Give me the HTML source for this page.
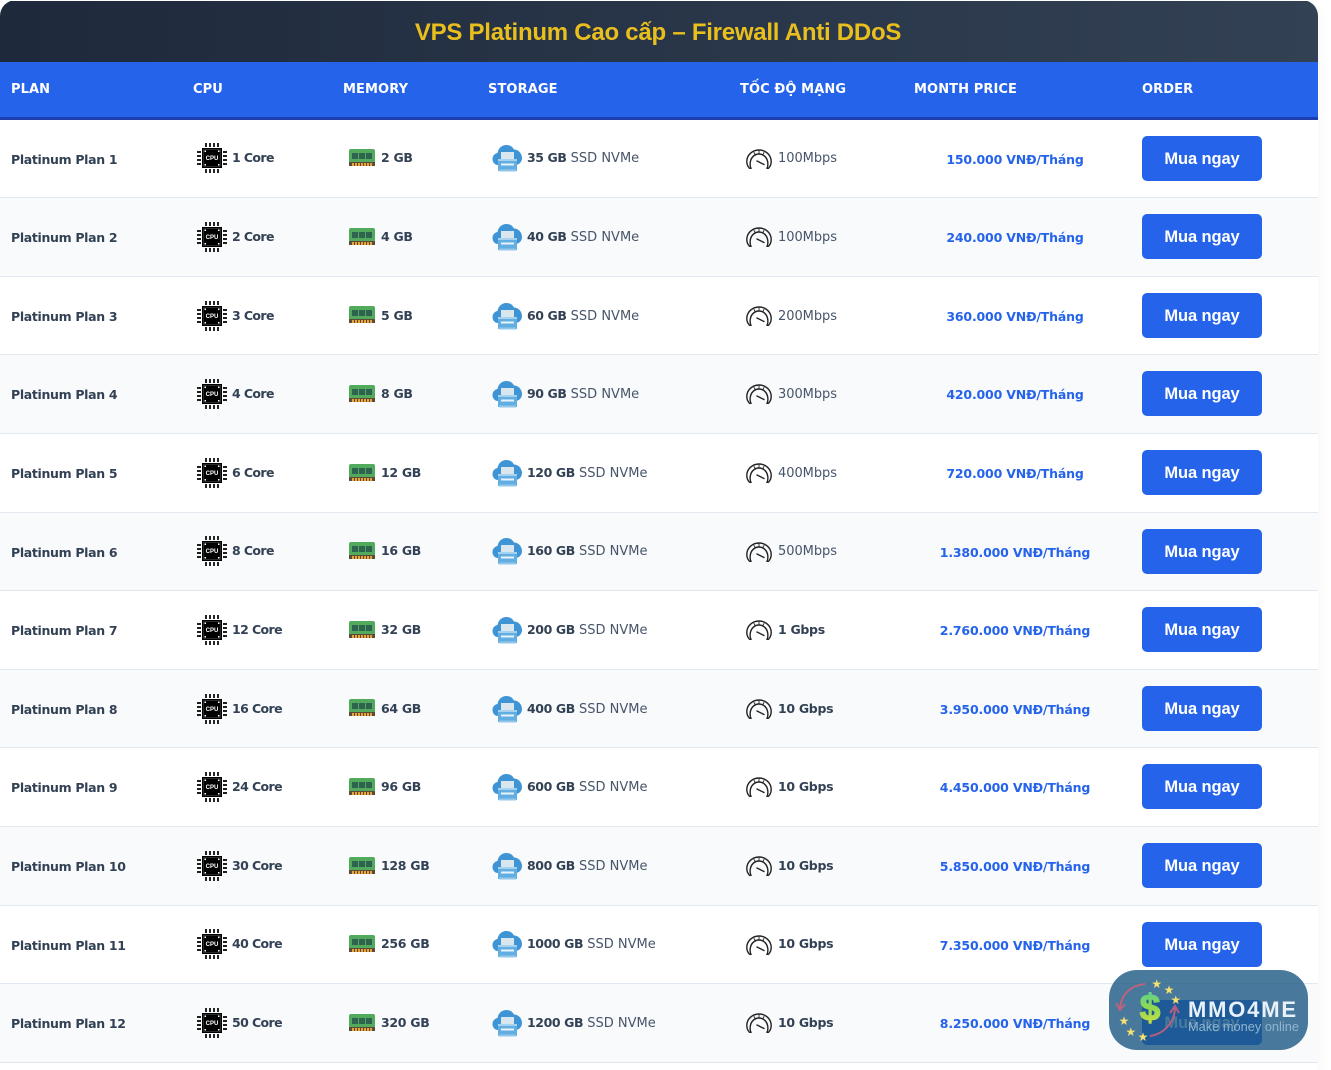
<!DOCTYPE html>
<html lang="vi"><head><meta charset="utf-8"><title>VPS Platinum</title>
<style>
*{box-sizing:border-box;margin:0;padding:0}
html,body{width:1331px;height:1070px;overflow:hidden;background:#fff}
body{position:relative;font-family:"DejaVu Sans","Liberation Sans",sans-serif;color:#1e293b}
#wrap{position:absolute;left:0;top:0;width:1318px;height:1070px;background:#fff;box-shadow:0 4px 14px rgba(0,0,0,.05);overflow:hidden;border-radius:16px 16px 0 0}
#title{position:absolute;left:0;top:1px;width:1318px;height:61px;background:linear-gradient(90deg,#1e293b,#334155);color:#e9bf1d;font:bold 24px/63px "Liberation Sans",sans-serif;letter-spacing:-.25px;text-align:center;padding-right:2px}
#head{position:absolute;left:0;top:62px;width:1318px;height:58px;background:#2563eb;border-bottom:3px solid #1e40af;color:#fff;font-size:13px;font-weight:bold;letter-spacing:.1px}
#head span{position:absolute;top:19px;line-height:18px;white-space:nowrap}
.r{position:absolute;left:0;width:1318px;height:78.6px;border-bottom:1px solid #e2e8f0;background:#fff;font-size:12.5px}
.r.e{background:#f8fafc}
.r>*{position:absolute;white-space:nowrap}
.p{left:11px;top:30px;line-height:20px;font-weight:bold;color:#334155;letter-spacing:-.33px}
.c,.m,.s,.n{top:28.8px;line-height:20px}
.c{left:232px;font-weight:bold;color:#334155;letter-spacing:-.6px}
.m{left:381px;font-weight:bold;color:#334155;letter-spacing:-.3px}
.s{left:527px;color:#475569;font-size:13px}.s b{color:#334155;font-size:12.5px;letter-spacing:-.4px}
.n{left:778px;color:#475569;font-size:13px}.n b{color:#334155;font-size:12.5px;letter-spacing:-.3px}
.r>.t{top:29.8px;letter-spacing:-.05px}
.v{left:915px;width:200px;top:30px;line-height:20px;text-align:center;font-weight:bold;color:#2563eb;letter-spacing:-.17px}
.b{left:1142px;top:16px;width:120px;height:45px;background:#2563eb;border-radius:5px;color:#fff;font:bold 16.5px/47px "Liberation Sans",sans-serif;letter-spacing:-.1px;text-align:center}
.i1{left:197px;top:23.8px;width:30px;height:30px}
.i2{left:349px;top:29.6px;width:26px;height:18px}
.i3{left:492px;top:24.8px;width:30px;height:28px}
.i4{left:746px;top:29px;width:26px;height:20px}
#badge{position:absolute;left:1109px;top:970px;width:199px;height:80px;border-radius:28px;background:rgba(28,88,130,.8);z-index:5}
#badge svg{position:absolute;left:0;top:0}
</style></head><body>
<svg width="0" height="0" style="position:absolute"><defs>
<symbol id="cpu" viewBox="0 0 30 30">
<rect x="5" y="5" width="20" height="20" fill="#000"/>
<rect x="6.500" y="6.500" width="17" height="17" fill="none" stroke="#555" stroke-width=".5"/>
<g fill="#fff"><rect x="7.500" y="7.500" width="1.500" height="1.500"/><rect x="21" y="7.500" width="1.500" height="1.500"/><rect x="7.500" y="21" width="1.500" height="1.500"/><rect x="21" y="21" width="1.500" height="1.500"/></g>
<g stroke="#000" stroke-width="1.700"><path d="M9 0v4M13 0v4M17 0v4M21 0v4M9 26v4M13 26v4M17 26v4M21 26v4M0 9h4M0 13h4M0 17h4M0 21h4M26 9h4M26 13h4M26 17h4M26 21h4"/></g>
<text x="15" y="17" text-anchor="middle" font-family="Liberation Sans" font-weight="bold" font-size="6" fill="#fff">CPU</text>
</symbol>
<symbol id="ram" viewBox="0 0 26 18">
<rect x="0" y="0" width="26" height="14" rx="2" fill="#52ab5c"/>
<g fill="#2e6350"><rect x="3" y="4" width="6" height="6"/><rect x="10" y="4" width="6" height="6"/><rect x="17" y="4" width="6" height="6"/></g>
<rect x="0" y="13" width="26" height="4" fill="#5d4a37"/>
<g fill="#eaa53a"><rect x="3" y="14" width="2" height="3"/><rect x="6" y="14" width="2" height="3"/><rect x="9" y="14" width="2" height="3"/><rect x="12" y="14" width="2" height="3"/><rect x="15" y="14" width="2" height="3"/><rect x="18" y="14" width="2" height="3"/><rect x="21" y="14" width="2" height="3"/></g>
</symbol>
<symbol id="cloud" viewBox="0 0 30 28">
<path d="M6 21C2.500 21 .5 18 .5 15c0-3 2-5.500 5-6 .8-5 4.500-8 9-8 3.300 0 6 1.600 7.500 4.500C26.500 5.500 30 9.500 30 14c0 4-3 7-7 7Z" fill="#3f94d6"/>
<rect x="9" y="8" width="13" height="7" fill="#d9e6ee"/>
<rect x="6" y="15" width="19" height="12" fill="#62aee2"/>
<rect x="6" y="15" width="19" height="2" fill="#a5d3ef"/>
<rect x="9" y="19.500" width="13" height="2" fill="#e8f3fa"/>
<rect x="7" y="25.500" width="17" height="2" fill="#93c8ea"/>
</symbol>
<symbol id="gauge" viewBox="0 0 26 20">
<g fill="none" stroke="#222" stroke-width="1.400" stroke-linecap="round" stroke-linejoin="round">
<path d="M5 19.300H3.500C1.800 17.500.8 15 .8 12.500.8 6 6.300 1 13 1s12.200 5 12.200 11.500c0 2.500-1 5-2.700 6.800H21"/>
<path d="M5 19.300C4 17.500 4 15 4.300 13 5 8.500 8.500 5 13 5s8 3.500 8.700 8c.3 2 .3 4.500-.7 6.300"/>
<path d="M11 12l7 3.500"/>
<path d="M13 2v3M8 3.500l1.500 2.500M18 3.500L16.500 6" stroke-width=".9"/>
</g>
</symbol>
</defs></svg>
<div id="wrap">
<div id="title">VPS Platinum Cao cấp – Firewall Anti DDoS</div>
<div id="head"><span style="left:11px">PLAN</span><span style="left:193px">CPU</span><span style="left:343px">MEMORY</span><span style="left:488px">STORAGE</span><span style="left:740px">TỐC ĐỘ MẠNG</span><span style="left:914px">MONTH PRICE</span><span style="left:1142px">ORDER</span></div>

<div class="r" style="top:119.6px"><span class="p">Platinum Plan 1</span><svg class="i1"><use href="#cpu"/></svg><span class="c">1 Core</span><svg class="i2"><use href="#ram"/></svg><span class="m">2 GB</span><svg class="i3"><use href="#cloud"/></svg><span class="s"><b>35 GB</b> SSD NVMe</span><svg class="i4"><use href="#gauge"/></svg><span class="n t">100Mbps</span><span class="v">150.000 VNĐ/Tháng</span><span class="b">Mua ngay</span></div>
<div class="r e" style="top:198.2px"><span class="p">Platinum Plan 2</span><svg class="i1"><use href="#cpu"/></svg><span class="c">2 Core</span><svg class="i2"><use href="#ram"/></svg><span class="m">4 GB</span><svg class="i3"><use href="#cloud"/></svg><span class="s"><b>40 GB</b> SSD NVMe</span><svg class="i4"><use href="#gauge"/></svg><span class="n t">100Mbps</span><span class="v">240.000 VNĐ/Tháng</span><span class="b">Mua ngay</span></div>
<div class="r" style="top:276.8px"><span class="p">Platinum Plan 3</span><svg class="i1"><use href="#cpu"/></svg><span class="c">3 Core</span><svg class="i2"><use href="#ram"/></svg><span class="m">5 GB</span><svg class="i3"><use href="#cloud"/></svg><span class="s"><b>60 GB</b> SSD NVMe</span><svg class="i4"><use href="#gauge"/></svg><span class="n t">200Mbps</span><span class="v">360.000 VNĐ/Tháng</span><span class="b">Mua ngay</span></div>
<div class="r e" style="top:355.4px"><span class="p">Platinum Plan 4</span><svg class="i1"><use href="#cpu"/></svg><span class="c">4 Core</span><svg class="i2"><use href="#ram"/></svg><span class="m">8 GB</span><svg class="i3"><use href="#cloud"/></svg><span class="s"><b>90 GB</b> SSD NVMe</span><svg class="i4"><use href="#gauge"/></svg><span class="n t">300Mbps</span><span class="v">420.000 VNĐ/Tháng</span><span class="b">Mua ngay</span></div>
<div class="r" style="top:434px"><span class="p">Platinum Plan 5</span><svg class="i1"><use href="#cpu"/></svg><span class="c">6 Core</span><svg class="i2"><use href="#ram"/></svg><span class="m">12 GB</span><svg class="i3"><use href="#cloud"/></svg><span class="s"><b>120 GB</b> SSD NVMe</span><svg class="i4"><use href="#gauge"/></svg><span class="n t">400Mbps</span><span class="v">720.000 VNĐ/Tháng</span><span class="b">Mua ngay</span></div>
<div class="r e" style="top:512.6px"><span class="p">Platinum Plan 6</span><svg class="i1"><use href="#cpu"/></svg><span class="c">8 Core</span><svg class="i2"><use href="#ram"/></svg><span class="m">16 GB</span><svg class="i3"><use href="#cloud"/></svg><span class="s"><b>160 GB</b> SSD NVMe</span><svg class="i4"><use href="#gauge"/></svg><span class="n t">500Mbps</span><span class="v">1.380.000 VNĐ/Tháng</span><span class="b">Mua ngay</span></div>
<div class="r" style="top:591.2px"><span class="p">Platinum Plan 7</span><svg class="i1"><use href="#cpu"/></svg><span class="c">12 Core</span><svg class="i2"><use href="#ram"/></svg><span class="m">32 GB</span><svg class="i3"><use href="#cloud"/></svg><span class="s"><b>200 GB</b> SSD NVMe</span><svg class="i4"><use href="#gauge"/></svg><span class="n"><b>1 Gbps</b></span><span class="v">2.760.000 VNĐ/Tháng</span><span class="b">Mua ngay</span></div>
<div class="r e" style="top:669.8px"><span class="p">Platinum Plan 8</span><svg class="i1"><use href="#cpu"/></svg><span class="c">16 Core</span><svg class="i2"><use href="#ram"/></svg><span class="m">64 GB</span><svg class="i3"><use href="#cloud"/></svg><span class="s"><b>400 GB</b> SSD NVMe</span><svg class="i4"><use href="#gauge"/></svg><span class="n"><b>10 Gbps</b></span><span class="v">3.950.000 VNĐ/Tháng</span><span class="b">Mua ngay</span></div>
<div class="r" style="top:748.4px"><span class="p">Platinum Plan 9</span><svg class="i1"><use href="#cpu"/></svg><span class="c">24 Core</span><svg class="i2"><use href="#ram"/></svg><span class="m">96 GB</span><svg class="i3"><use href="#cloud"/></svg><span class="s"><b>600 GB</b> SSD NVMe</span><svg class="i4"><use href="#gauge"/></svg><span class="n"><b>10 Gbps</b></span><span class="v">4.450.000 VNĐ/Tháng</span><span class="b">Mua ngay</span></div>
<div class="r e" style="top:827px"><span class="p">Platinum Plan 10</span><svg class="i1"><use href="#cpu"/></svg><span class="c">30 Core</span><svg class="i2"><use href="#ram"/></svg><span class="m">128 GB</span><svg class="i3"><use href="#cloud"/></svg><span class="s"><b>800 GB</b> SSD NVMe</span><svg class="i4"><use href="#gauge"/></svg><span class="n"><b>10 Gbps</b></span><span class="v">5.850.000 VNĐ/Tháng</span><span class="b">Mua ngay</span></div>
<div class="r" style="top:905.6px"><span class="p">Platinum Plan 11</span><svg class="i1"><use href="#cpu"/></svg><span class="c">40 Core</span><svg class="i2"><use href="#ram"/></svg><span class="m">256 GB</span><svg class="i3"><use href="#cloud"/></svg><span class="s"><b>1000 GB</b> SSD NVMe</span><svg class="i4"><use href="#gauge"/></svg><span class="n"><b>10 Gbps</b></span><span class="v">7.350.000 VNĐ/Tháng</span><span class="b">Mua ngay</span></div>
<div class="r e" style="top:984.2px"><span class="p">Platinum Plan 12</span><svg class="i1"><use href="#cpu"/></svg><span class="c">50 Core</span><svg class="i2"><use href="#ram"/></svg><span class="m">320 GB</span><svg class="i3"><use href="#cloud"/></svg><span class="s"><b>1200 GB</b> SSD NVMe</span><svg class="i4"><use href="#gauge"/></svg><span class="n"><b>10 Gbps</b></span><span class="v">8.250.000 VNĐ/Tháng</span><span class="b">Mua ngay</span></div>
</div>
<div id="badge"><svg width="199" height="80" viewBox="0 0 199 80">
<defs><linearGradient id="dg" x1="0" y1="0" x2="0" y2="1"><stop offset="0" stop-color="#4fd0a0"/><stop offset=".5" stop-color="#8fd850"/><stop offset="1" stop-color="#d8e040"/></linearGradient></defs>
<g fill="none" stroke="#d0607a" stroke-width="2" opacity=".85"><path d="M36 14C22 15 11 25 11 40"/><path d="M7 33l4 7 5-6"/><path d="M41 66C55 64 66 52 66 37"/><path d="M61 43l5-7 4 7"/></g>
<text x="41" y="50" text-anchor="middle" font-family="Liberation Sans" font-weight="bold" font-size="37" fill="url(#dg)" stroke="url(#dg)" stroke-width="1.200">$</text>
<g fill="#f5e070" font-family="DejaVu Sans" font-size="12" text-anchor="middle"><text x="47.700" y="18">★</text><text x="60" y="24">★</text><text x="66.700" y="34">★</text><text x="15" y="55">★</text><text x="21.700" y="66">★</text><text x="34" y="71">★</text></g>
<text x="79" y="47" font-family="Liberation Sans" font-weight="bold" font-size="22" letter-spacing="1.800" fill="#e8f0fa">MMO4ME</text>
<text x="79" y="61" font-family="Liberation Sans" font-size="12.800" fill="#8fb5d0">Make money online</text>
</svg></div>
</body></html>
